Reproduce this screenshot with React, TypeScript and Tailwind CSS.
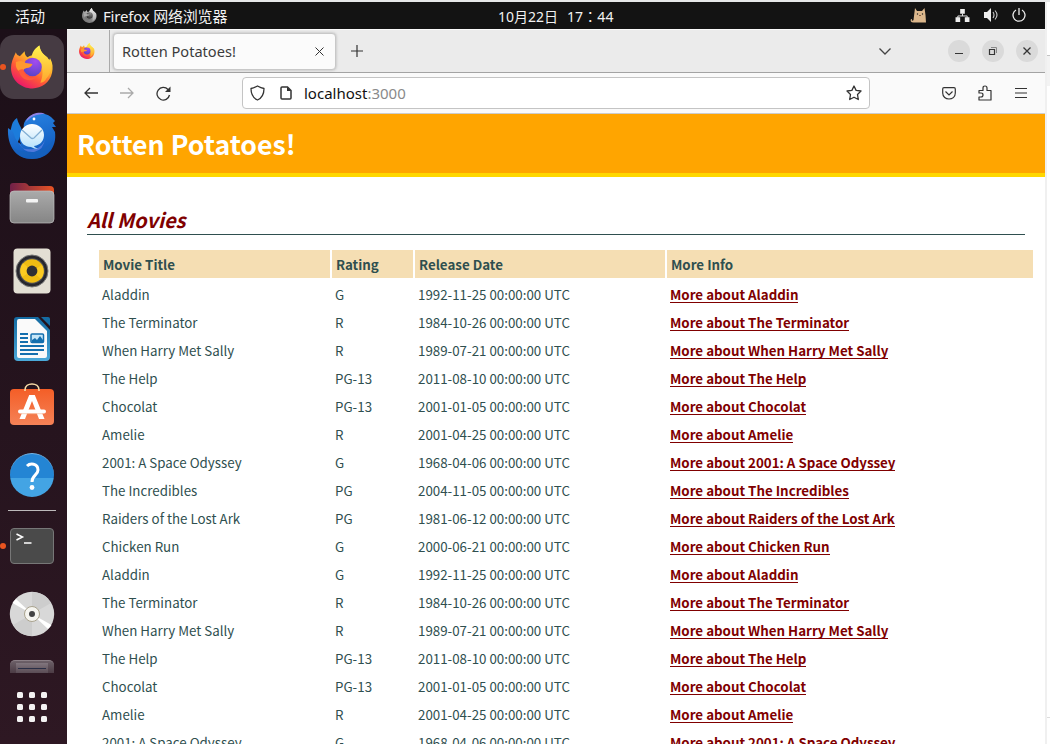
import React from 'react';

const movies = [
  ['Aladdin', 'G', '1992-11-25'],
  ['The Terminator', 'R', '1984-10-26'],
  ['When Harry Met Sally', 'R', '1989-07-21'],
  ['The Help', 'PG-13', '2011-08-10'],
  ['Chocolat', 'PG-13', '2001-01-05'],
  ['Amelie', 'R', '2001-04-25'],
  ['2001: A Space Odyssey', 'G', '1968-04-06'],
  ['The Incredibles', 'PG', '2004-11-05'],
  ['Raiders of the Lost Ark', 'PG', '1981-06-12'],
  ['Chicken Run', 'G', '2000-06-21'],
];
const rows = [...movies, ...movies.slice(0, 7)];

function Fox({ className, gray = false }: { className: string; gray?: boolean }) {
  const id = gray ? 'g' : 'c';
  return (
    <svg viewBox="0 0 44 44" className={className}>
      <defs>
        <linearGradient id={id + 'body'} x1="0.85" y1="0.1" x2="0.3" y2="1">
          <stop offset="0" stopColor={gray ? '#ddd' : '#fff14a'} />
          <stop offset=".35" stopColor={gray ? '#bbb' : '#ffb62a'} />
          <stop offset=".65" stopColor={gray ? '#888' : '#ff5a36'} />
          <stop offset="1" stopColor={gray ? '#777' : '#e9156c'} />
        </linearGradient>
        <radialGradient id={id + 'globe'} cx=".65" cy=".2" r=".8">
          <stop offset="0" stopColor={gray ? '#888' : '#a34bf0'} />
          <stop offset="1" stopColor={gray ? '#333' : '#5b44c8'} />
        </radialGradient>
        <linearGradient id={id + 'flame'} x1="0" y1="0" x2="0" y2="1">
          <stop offset="0" stopColor={gray ? '#eee' : '#fff44f'} />
          <stop offset="1" stopColor={gray ? '#aaa' : '#ffa52e'} />
        </linearGradient>
      </defs>
      <path d="M5 7 C6 10 7 10 9 11 L14 6 C14 9 15 11 17 12 C20 10 22 10 24 10 C24 5 27 2 29 0 C30 6 33 9 37 12 L39 15 L40 13 C43 18 43 23 42 28 C40 38 31 44 22 44 C10 44 0 35 0 23 C0 18 2 13 5 7Z" fill={`url(#${id}body)`} />
      <path d="M21 12 C22 5 26 2 29 0 C30 7 33 9 37 12 C42 18 43 27 36 34 C35 37 32 38 30 38 C32 34 34 25 30 19 C28 15 24 15 21 12Z" fill={`url(#${id}flame)`} />
      <circle cx="22" cy="22" r="9.500" fill={`url(#${id}globe)`} />
      <path d="M5 17 C10 15 13 16 15 18 L22 19 C21 22 19 23 16 23 C13 24 12 25 12 27 C9 28 6 25 5 21Z" fill={gray ? '#aaa' : '#ff982f'} />
      <path d="M12 24 C13 31 20 35 27 32 C20 39 9 35 8 25Z" fill={gray ? '#777' : '#ff5a3a'} />
    </svg>
  );
}

function Thunderbird() {
  return (
    <svg viewBox="0 0 50 48" className="h-[48px] w-[50px]">
      <defs>
        <linearGradient id="tb" x1="0" y1="0" x2=".3" y2="1">
          <stop offset="0" stopColor="#2a86e4" />
          <stop offset="1" stopColor="#125cc0" />
        </linearGradient>
        <linearGradient id="te" x1="0" y1="0" x2="0" y2="1">
          <stop offset="0" stopColor="#fff" />
          <stop offset="1" stopColor="#b4e0fb" />
        </linearGradient>
      </defs>
      <path d="M10 6 C4 10 5 15 3 20 L10 32 L15 20 C15 15 11 12 10 6Z" fill="#1c7cdb" />
      <path d="M1 16 C0 34 9 47 25 47 C40 47 50 36 48 20 L45 15 L49 15 L46 11 L48 9 L44 5 C37 0 27 0 21 6 C18 8 16 12 17 16 L14 20 C12 25 12 28 14 32 C7 29 8 21 5 19Z" fill="url(#tb)" />
      <path d="M20 7 C26 0 34 0 38 2 C30 2 24 4 19 10Z" fill="#8e83e6" />
      <path d="M4 34 C14 43 36 43 46 28 C44 40 36 47 25 47 C15 47 8 42 4 34Z" fill="#1763bb" opacity=".65" />
      <path d="M12 30Q13 39 27 37Q37 35 38 26Q37 38 27 40Q16 41 12 30Z" fill="#6783e5" opacity=".7" />
      <path d="M25 12C18 12 13 18 13 24C13 31 18 35 24 35Q27 37 31 37Q27 35 27 34C34 33 37 28 37 23C37 16 31 12 25 12Z" fill="url(#te)" />
      <path d="M15 18 24 26Q25 27 27 26L35 18" stroke="#82afd3" fill="none" strokeWidth="1.300" />
      <circle cx="27" cy="7" r="1.400" fill="#fff" />
    </svg>
  );
}

function Files() {
  return (
    <svg viewBox="0 0 46 42" className="h-[42px] w-[46px]">
      <defs>
        <linearGradient id="ff"><stop stopColor="#702048" /><stop offset="1" stopColor="#e85424" /></linearGradient>
        <linearGradient id="fg" x1="0" y1="0" x2="0" y2="1"><stop stopColor="#aaa" /><stop offset="1" stopColor="#858585" /></linearGradient>
      </defs>
      <path d="M1 4Q1 1 4 1H16Q18 1 20 4H41Q45 4 45 8V20H1Z" fill="url(#ff)" />
      <rect x="1" y="9" width="44" height="32" rx="4" fill="url(#fg)" stroke="#c0c0c0" strokeWidth=".7" />
      <rect x="17" y="17" width="12" height="3.5" rx="1" fill="#f4f4f4" />
    </svg>
  );
}

function Speaker() {
  return (
    <svg viewBox="0 0 38 46" className="h-[46px] w-[38px]">
      <rect x=".5" y=".5" width="37" height="45" rx="4" fill="#e3dfd4" />
      <circle cx="19" cy="23" r="16" fill="#27272e" stroke="#777" strokeWidth="1" />
      <circle cx="19" cy="23" r="12.8" fill="#555" />
      <circle cx="19" cy="23" r="11.7" fill="#f0bd13" />
      <path d="M19 23 9 29A11.7 11.7 0 0 1 10 15ZM19 23 29 17A11.7 11.7 0 0 1 28 31Z" fill="#ffce27" opacity=".8" />
      <circle cx="19" cy="23" r="5.4" fill="#303033" />
    </svg>
  );
}

function Writer() {
  return (
    <svg viewBox="0 0 38 46" className="h-[46px] w-[38px]">
      <defs><linearGradient id="lw" x1="0" y1="0" x2="0" y2="1"><stop stopColor="#136aa1" /><stop offset="1" stopColor="#4ba9d9" /></linearGradient></defs>
      <path d="M4 1H25L37 14V41Q37 45 33 45H5Q1 45 1 41V4Q1 1 4 1Z" fill="url(#lw)" />
      <path d="M6 3H22L34 15V40Q34 42 32 42H6Q4 42 4 40V5Q4 3 6 3Z" fill="#fafafa" />
      <path d="M28 1H35Q37 1 37 3V10Z" fill="#156ca3" />
      <path d="M7 18H15M7 22H15M7 26H15M7 30H31M7 34H31M7 38H25" stroke="#146fae" strokeWidth="2" />
      <rect x="18" y="18" width="12.5" height="8.5" rx="1" fill="#c7e7f8" stroke="#146fae" strokeWidth="1.5" />
      <path d="M19 26V24L22 22L24 24L27 20L30 24V26Z" fill="#146fae" />
    </svg>
  );
}

function Store() {
  return (
    <svg viewBox="0 0 46 44" className="h-[44px] w-[46px]">
      <defs><linearGradient id="st" x1="0" y1="0" x2="0" y2="1"><stop stopColor="#f45e27" /><stop offset="1" stopColor="#f58257" /></linearGradient></defs>
      <rect x="1" y="7" width="44" height="36" rx="4" fill="url(#st)" />
      <path d="M16 9V8C16 0 30 0 30 8V9" fill="none" stroke="#f7dba6" strokeWidth="1.6" />
      <path d="M20.2 13H25.8L35.5 37H30L23 19L16 37H10.5Z" fill="#fff" />
      <path d="M11 29.5H35" stroke="#fff" strokeWidth="4" strokeLinecap="round" />
      <path d="M12 31.7H34" stroke="#f7bd9f" strokeWidth=".7" />
    </svg>
  );
}

function Disc() {
  return (
    <svg viewBox="0 0 46 46" className="h-[46px] w-[46px]">
      <circle cx="23" cy="23" r="22.2" fill="#d8d8d8" />
      <path d="M23 23V1A22 22 0 0 1 42 12ZM23 23V45A22 22 0 0 1 4 34Z" fill="#cdcdcd" />
      <path d="M23 23 3.500 12Q5 9.500 7 8ZM23 23 42.500 34Q41 36.500 39 38Z" fill="#fff" />
      <circle cx="23" cy="23" r="7.5" fill="#f6f5f0" stroke="#aaa38e" strokeWidth="1" />
      <circle cx="23" cy="23" r="3" fill="#444" />
    </svg>
  );
}

function Dock() {
  return (
    <aside className="flex w-[67px] shrink-0 flex-col items-center bg-linear-to-b from-[#1c0f18] to-[#2e1823] pr-[3px]">
      <div className="relative mt-[6px] flex h-[64px] w-[64px] items-center justify-center rounded-[14px] bg-[#463b43]">
        <span className="absolute left-0 top-[29px] h-[6px] w-[6px] rounded-full bg-[#e95420]" />
        <Fox className="mb-px h-[44px] w-[43px]" />
      </div>
      <div className="mt-[13px] h-[48px]"><Thunderbird /></div>
      <div className="mt-[22px] h-[42px]"><Files /></div>
      <div className="mt-[24px] h-[46px]"><Speaker /></div>
      <div className="mt-[22px] h-[46px]"><Writer /></div>
      <div className="mt-[20px] h-[44px]"><Store /></div>
      <div className="mt-[27px] flex h-[44px] w-[44px] items-center justify-center rounded-full border-t border-[#73b7e8] bg-linear-to-b from-[#2485d4] from-55% to-[#43a4e4] to-55%">
        <svg viewBox="0 0 44 44" className="h-[44px] w-[44px]"><path d="M17 12C20 9 28 9 28 16C28 21 22 21 22 28" fill="none" stroke="#fff" strokeWidth="3" /><circle cx="22" cy="33.5" r="2.4" fill="#fff" /></svg>
      </div>
      <div className="mt-[13px] h-px w-[48px] bg-[#bdb9ba]" />
      <div className="relative mt-[17px] flex h-[36px] w-full justify-center">
        <span className="absolute left-0 top-[15px] h-[6px] w-[6px] rounded-full bg-[#e95420]" />
        <div className="h-[36px] w-[44px] rounded-[4px] border border-[#777] bg-[#4a4a4a]">
          <svg viewBox="0 0 42 34" className="h-[34px] w-[42px]"><path d="M5.5 5 11.5 8 5.5 11M13 14H20.500" fill="none" stroke="#fff" strokeWidth="1.500" /></svg>
        </div>
      </div>
      <div className="mt-[27px] h-[46px]"><Disc /></div>
      <div className="mt-[23px] flex h-[13px] w-[44px] justify-center rounded-t-[5px] border-t border-[#8b7f86] bg-linear-to-b from-[#6c6068] to-[#4c3c45]">
        <div className="mt-[2px] flex h-[10px] w-[32px] flex-col items-center justify-center bg-linear-to-b from-[#81767e] to-[#5a4c55]"><div className="h-px w-[28px] bg-[#292e46]" /></div>
      </div>
      <div className="mt-[19px] grid grid-cols-3 gap-[6px]">
        {Array.from({ length: 9 }, (_, i) => <div key={i} className="h-[6px] w-[6px] rounded-[1.500px] bg-[#f3f2f2]" />)}
      </div>
    </aside>
  );
}

function TopBar() {
  return (
    <header className="flex h-[27px] w-[1045px] shrink-0 items-center bg-[#131313] font-['Noto_Sans','Noto_Sans_CJK_SC',sans-serif] text-[14px] text-[#f2f2f2]">
      <span className="ml-[15px] w-[67px] pt-[2px] text-[15px] leading-[25px]">活动</span>
      <Fox gray className="mb-[1px] h-[15px] w-[15px]" />
      <span className="ml-[6px] w-[395px] whitespace-pre pt-[2px] text-[15px] leading-[25px] tracking-[-0.2px]">Firefox 网络浏览器</span>
      <span className="flex w-[412px] whitespace-pre pt-[3px] leading-[24px]"><span className="w-[69px]">10月22日</span><span className="font-['Noto_Sans','Noto_Sans_CJK_JP',sans-serif] tracking-[0.1px]">17：44</span></span>
      <svg viewBox="0 0 17 17" className="mb-px h-[17px] w-[17px]"><path d="M5 1 7 4H12L14.500 1 15.500 8 16 15.500H4.500C1 16 0 14 1 12L2 12C1 14 3 14 3.500 13Z" fill="#dcb78c" /><circle cx="7.500" cy="7" r=".7" fill="#222" /><circle cx="12.500" cy="7" r=".7" fill="#222" /><path d="M9 8.500H11" stroke="#8b6243" /></svg>
      <svg viewBox="0 0 15 14" className="ml-[28px] mb-px h-[13px] w-[15px]" fill="#eee"><path d="M5 0H10V5H5ZM0 9H5V14H0ZM10 9H15V14H10Z" /><path d="M7.500 5V7.500M2.500 10V7.500H12.500V10" fill="none" stroke="#eee" strokeWidth="1" /></svg>
      <svg viewBox="0 0 15 14" className="ml-[14px] mb-px h-[14px] w-[15px]"><path d="M0 4H3L7 0V14L3 10H0Z" fill="#eee" /><path d="M9 4Q11 7 9 10M11 2.500Q15 7 11 11.500" fill="none" stroke="#ccc" strokeWidth="1.100" /></svg>
      <svg viewBox="0 0 14 14" className="ml-[13px] mb-px h-[14px] w-[14px]"><path d="M4 2A6 6 0 1 0 10 2M7 0V7" fill="none" stroke="#eee" strokeWidth="1.300" /></svg>
    </header>
  );
}

function Tabs() {
  return (
    <div className="flex h-[44px] items-center border-b border-[#a3a3a3] border-t border-t-[#fafafa] bg-[#ebebeb]">
      <div className="flex h-full w-[43px] items-center border-r border-[#aaa] pl-[12px]"><Fox className="h-[16px] w-[16px]" /></div>
      <div className="ml-[3px] flex h-[37px] w-[223px] items-center rounded-[4px] border border-[#c8c8c8] bg-[#fbfbfb] shadow-[0_0_3px_rgba(0,0,0,.25)]">
        <span className="ml-[8px] w-[193px] pt-px text-[14.600px] text-[#3c3c3c]">Rotten Potatoes!</span>
        <svg viewBox="0 0 9 9" className="h-[9px] w-[9px]"><path d="M.5.5 8.500 8.500M8.500.5.5 8.500" stroke="#333" /></svg>
      </div>
      <svg viewBox="0 0 12 12" className="ml-[15px] h-[12px] w-[12px]"><path d="M6 0V12M0 6H12" stroke="#333" strokeWidth="1.200" /></svg>
      <svg viewBox="0 0 12 7" className="ml-[516px] h-[7px] w-[12px]"><path d="M.5.5 6 6 11.500.5" fill="none" stroke="#444" strokeWidth="1.300" /></svg>
      <div className="ml-[57px] flex gap-[12px]">
        <div className="h-[22px] w-[22px] rounded-full bg-[#dadada]"><svg viewBox="0 0 22 22" className="h-[22px] w-[22px]"><path d="M7 13.500H15" stroke="#353535" strokeWidth="1" /></svg></div>
        <div className="h-[22px] w-[22px] rounded-full bg-[#dadada]"><svg viewBox="0 0 22 22" className="h-[22px] w-[22px]" fill="none"><path d="M9 7.500H14.500V13" stroke="#888" /><path d="M7.500 9.500H12.500V14.500H7.500Z" stroke="#353535" strokeWidth="1.200" /></svg></div>
        <div className="h-[22px] w-[22px] rounded-full bg-[#dadada]"><svg viewBox="0 0 22 22" className="h-[22px] w-[22px]"><path d="M7.500 7.500 14.500 14.500M14.500 7.500 7.500 14.500" stroke="#353535" strokeWidth="1.300" /></svg></div>
      </div>
    </div>
  );
}

function NavBar() {
  return (
    <div className="flex h-[41px] items-center border-b border-[#ccc] bg-[#fafafa] text-[#333]">
      <svg viewBox="0 0 14 12" className="ml-[17px] h-[12px] w-[14px]"><path d="M14 6H1M6 1 1 6 6 11" fill="none" stroke="currentColor" strokeWidth="1.300" /></svg>
      <svg viewBox="0 0 14 12" className="ml-[22px] h-[12px] w-[14px] text-[#aaa]"><path d="M0 6H13M8 1 13 6 8 11" fill="none" stroke="currentColor" strokeWidth="1.300" /></svg>
      <svg viewBox="0 0 15 15" className="ml-[22px] h-[15px] w-[15px]"><path d="M13.500 9A6.300 6.300 0 1 1 12 3.500L13.500 5" fill="none" stroke="currentColor" strokeWidth="1.300" /><path d="M14.500.5V6H9Z" fill="currentColor" /></svg>
      <div className="ml-[71px] flex h-[32px] w-[628px] items-center rounded-[4px] border border-[#c4c4c4] bg-white">
        <svg viewBox="0 0 15 16" className="ml-[7px] h-[16px] w-[15px]"><path d="M7.500 1 Q11 3 14 3.500C14 9 12 13 7.500 15C3 13 1 9 1 3.500Q4 3 7.500 1Z" fill="none" stroke="currentColor" strokeWidth="1.300" strokeLinejoin="round" /></svg>
        <svg viewBox="0 0 12 14" className="ml-[15px] h-[14px] w-[12px]"><path d="M1 2Q1 1 2 1H7.500L11 4.500V12Q11 13 10 13H2Q1 13 1 12Z" fill="none" stroke="currentColor" strokeWidth="1.500" /><path d="M7 1V5H11Z" fill="currentColor" /></svg>
        <span className="ml-[12px] w-[542px] text-[15px] text-[#111]">localhost<span className="text-[#8a8a8a]">:3000</span></span>
        <svg viewBox="0 0 16 16" className="h-[16px] w-[16px]"><path d="M8 1 10.100 5.400 15 6 11.500 9.500 12.300 14.500 8 12.200 3.700 14.500 4.500 9.500 1 6 5.900 5.400Z" fill="none" stroke="currentColor" strokeWidth="1.300" strokeLinejoin="round" /></svg>
      </div>
      <svg viewBox="0 0 14 13" className="ml-[72px] h-[13px] w-[14px]"><path d="M2 .7H12Q13.300.7 13.300 2V6C13.300 14 .7 14 .7 6V2Q.7.7 2 .7ZM3.500 4.500 7 8 10.500 4.500" fill="none" stroke="currentColor" strokeWidth="1.200" /></svg>
      <svg viewBox="0 0 14 16" className="ml-[22px] h-[16px] w-[14px]"><path d="M1 8V5.500H5V3Q5 1 7 1T9 3V5.500H13V15H1V12H3Q5 12 5 10T3 8Z" fill="none" stroke="currentColor" strokeWidth="1.200" strokeLinejoin="round" /></svg>
      <svg viewBox="0 0 12 10" className="ml-[23px] h-[10px] w-[12px]"><path d="M0 .5H12M0 5H12M0 9.500H12" stroke="currentColor" /></svg>
    </div>
  );
}

export default function App() {
  return (
    <div className="flex h-[744px] w-[1050px] flex-col overflow-hidden bg-white">
      <div className="h-[2px] shrink-0 bg-[#e6e7e8]" />
      <div className="flex h-[742px]">
        <div className="flex w-[1045px] flex-col">
          <TopBar />
          <div className="flex min-h-0 flex-1">
            <Dock />
            <div className="flex w-[978px] flex-col font-['Noto_Sans',sans-serif]">
              <Tabs />
              <NavBar />
              <main className="min-h-0 flex-1 overflow-hidden bg-white font-['Noto_Sans_CJK_SC',sans-serif] text-[13.333px] text-[#2f4f4f]">
                <h1 className="h-[63px] border-b-4 border-[#ffd700] bg-[#ffa500] pl-[10px] text-[26.667px] font-bold leading-[59px] text-white">Rotten Potatoes!</h1>
                <h2 className="ml-[20px] mt-[28px] h-[30px] w-[938px] border-b border-[#2f4f4f] text-[20px] font-bold italic leading-[29px] text-[#800000]">All Movies</h2>
                <div className="ml-[32px] mt-[15px] w-[934px]">
                  <div className="grid h-[28px] grid-cols-[231px_81px_250px_366px] gap-x-[2px] font-bold leading-[26px]">
                    {['Movie Title', 'Rating', 'Release Date', 'More Info'].map((h) => <div key={h} className="bg-[#f5deb3] pl-[4px] pt-[2px]">{h}</div>)}
                  </div>
                  <div className="pt-[3px]">
                    {rows.map(([title, rating, date], i) => (
                      <div key={i} className="grid h-[28px] grid-cols-[231px_81px_250px_366px] gap-x-[2px] whitespace-nowrap leading-[28px]">
                        <div className="pl-[3px]">{title}</div>
                        <div className="pl-[3px]">{rating}</div>
                        <div className="pl-[3px]">{date} 00:00:00 UTC</div>
                        <div className="pl-[3px]"><a className="inline-block h-[22px] border-b border-[#800000] font-bold text-[#800000]">More about {title}</a></div>
                      </div>
                    ))}
                  </div>
                </div>
              </main>
            </div>
          </div>
        </div>
        <div className="w-[2px] bg-[#f0f0f0]" />
        <div className="w-[3px]"><div className="h-[54px] border-b border-[#c4c4c4]" /><div className="h-[30px] bg-[#f3f3f3]" /><div className="h-[632px] border-b border-[#ddd]" /></div>
      </div>
    </div>
  );
}
